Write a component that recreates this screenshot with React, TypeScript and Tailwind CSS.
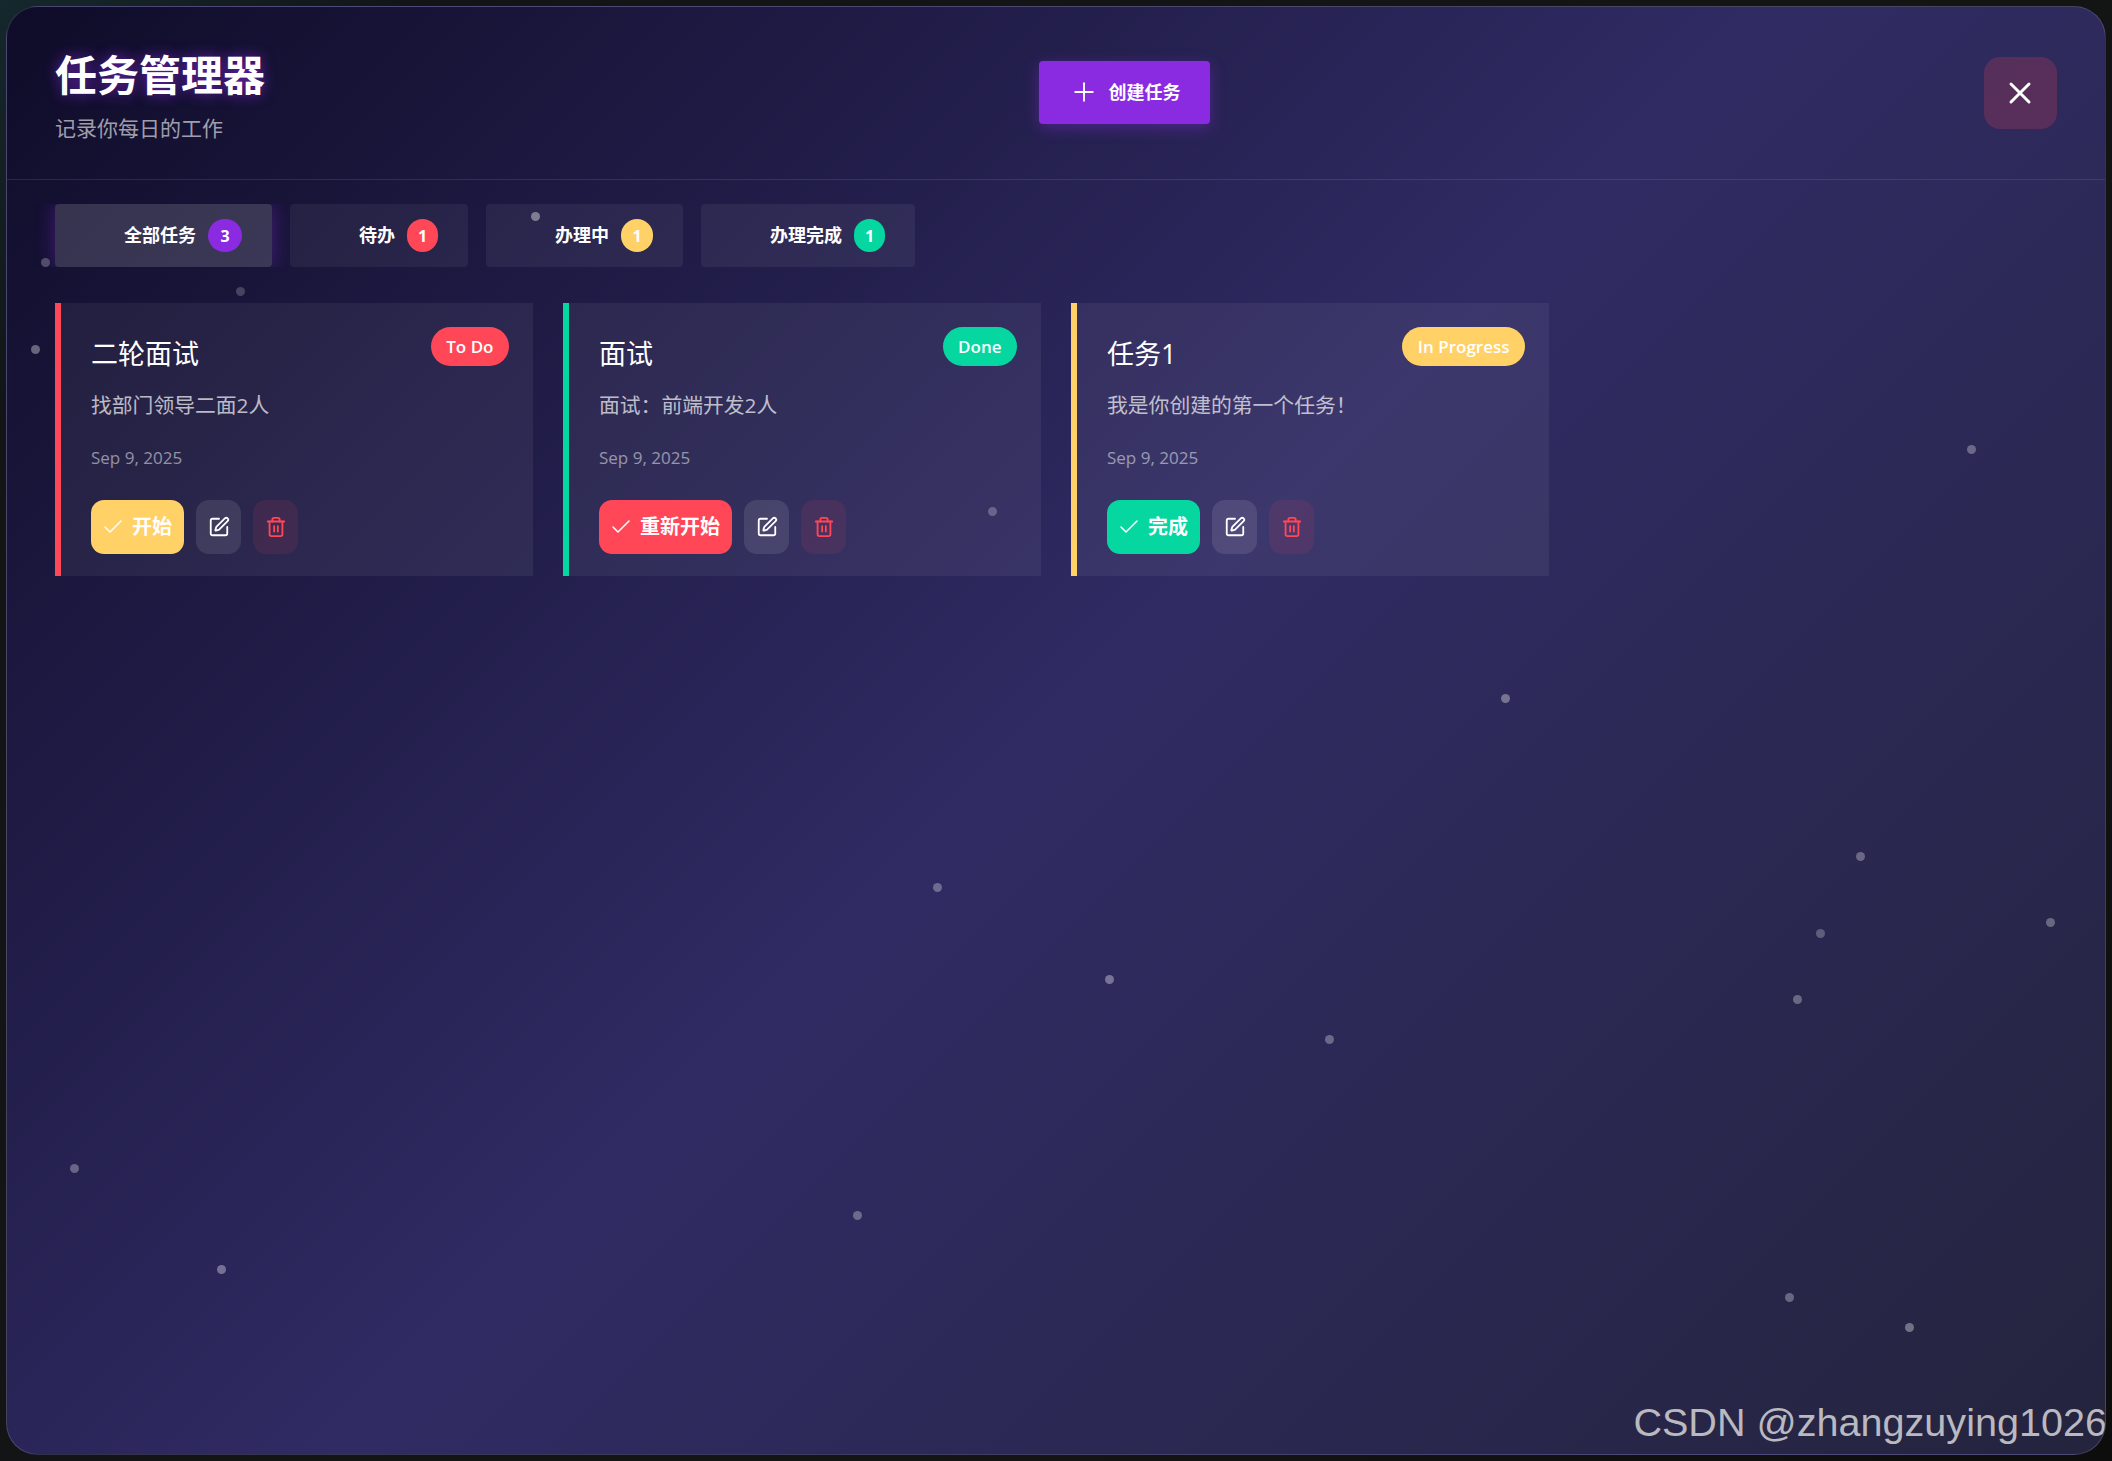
import { Check, Plus, SquarePen, Trash2, X } from 'lucide-react'

const tabs = [
  { label: '全部任务', count: 3, badge: 'w-[34px] bg-[#8a2be2]', active: true },
  { label: '待办', count: 1, badge: 'w-[31px] bg-[#ff4757]', active: false },
  { label: '办理中', count: 1, badge: 'w-[32px] bg-[#ffd166]', active: false },
  { label: '办理完成', count: 1, badge: 'w-[31px] bg-[#06d6a0]', active: false },
]

const tasks = [
  {
    title: '二轮面试',
    desc: '找部门领导二面2人',
    status: 'To Do',
    edge: 'border-[#ff4757]',
    pill: 'bg-[#ff4757]',
    action: '开始',
    actionBg: 'bg-[#ffd166]',
  },
  {
    title: '面试',
    desc: '面试：前端开发2人',
    status: 'Done',
    edge: 'border-[#06d6a0]',
    pill: 'bg-[#06d6a0]',
    action: '重新开始',
    actionBg: 'bg-[#ff4757]',
  },
  {
    title: '任务1',
    desc: '我是你创建的第一个任务！',
    status: 'In Progress',
    edge: 'border-[#ffd166]',
    pill: 'bg-[#ffd166]',
    action: '完成',
    actionBg: 'bg-[#06d6a0]',
  },
]

// floating particles, page coordinates of each dot's centre
const dots = [
  [45, 263, 0.25], [240, 292, 0.2], [35, 350, 0.35], [535, 217, 0.4], [992, 512, 0.25],
  [1971, 450, 0.3], [1505, 699, 0.35], [937, 888, 0.3], [1860, 857, 0.3], [1820, 934, 0.25],
  [2050, 923, 0.3], [1109, 980, 0.35], [1797, 1000, 0.3], [1329, 1040, 0.3], [74, 1169, 0.3],
  [857, 1216, 0.3], [221, 1270, 0.35], [1789, 1298, 0.3], [1909, 1328, 0.35],
]

function TaskCard({ task }: { task: (typeof tasks)[number] }) {
  return (
    <div className={`relative h-[273px] border-l-[6px] bg-white/[0.06] pl-[30px] ${task.edge}`}>
      <span
        className={`absolute right-[24px] top-[24px] flex h-[39px] items-center rounded-full px-[15.5px] text-[17px] font-semibold text-white ${task.pill}`}
      >
        {task.status}
      </span>
      <h3 className="pt-[30px] text-[27px] font-normal leading-[42px] text-white">{task.title}</h3>
      <p className="mt-[15px] text-[20.8px] leading-[30px] text-white/70">{task.desc}</p>
      <p className="mt-[26px] text-[17px] leading-[24px] text-white/50">Sep 9, 2025</p>
      <div className="mt-[30px] flex gap-[12px]">
        <button
          className={`flex h-[54px] items-center gap-[7px] rounded-[13px] pl-[10px] pr-[12px] text-[20px] font-bold text-white ${task.actionBg}`}
        >
          <Check size={24} strokeWidth={1.5} />
          {task.action}
        </button>
        <button className="flex h-[54px] w-[45px] items-center justify-center rounded-[13px] bg-white/10 text-white">
          <SquarePen size={22} />
        </button>
        <button className="flex h-[54px] w-[45px] items-center justify-center rounded-[13px] bg-[#ff4757]/10 text-[#ff4757]">
          <Trash2 size={22} />
        </button>
      </div>
    </div>
  )
}

export default function App() {
  return (
    <div className="h-[1461px] w-[2112px] overflow-hidden bg-[linear-gradient(135deg,#15282d,#121416_12%,#141414_70%,#0d0d0d)] p-[6px] font-['Open_Sans','Noto_Sans_CJK_SC',sans-serif]">
      <div className="relative h-full overflow-hidden rounded-[32px] border border-white/15 bg-[linear-gradient(135deg,#0f0c29,#302b63,#24243e)]">
        {/* Header */}
        <header className="flex h-[173px] items-center justify-between border-b border-white/10 px-[48px]">
          <div className="pt-[4px]">
            <h1 className="text-[42px] font-bold leading-[56px] text-white [text-shadow:0_0_14px_rgba(138,43,226,0.7)]">
              任务管理器
            </h1>
            <p className="mt-[10px] text-[21px] leading-[30px] text-white/60">记录你每日的工作</p>
          </div>
          <button className="mb-[2px] flex h-[63px] w-[171px] items-center justify-center gap-[10px] rounded-[4px] bg-[#8a2be2] text-[18px] font-bold text-white shadow-[0_4px_15px_rgba(138,43,226,0.4)]">
            <Plus size={30} strokeWidth={1.5} />
            创建任务
          </button>
          <button className="flex h-[72px] w-[73px] items-center justify-center rounded-[16px] bg-[#ff4757]/20 text-white">
            <X size={36} strokeWidth={2} />
          </button>
        </header>

        {/* Filter tabs, the row clips the active glow top and bottom */}
        <div className="mt-[24px] flex gap-[18px] overflow-hidden px-[48px]">
          {tabs.map((tab) => (
            <button
              key={tab.label}
              className={`flex h-[63px] items-center gap-[12px] rounded-[4px] pl-[69px] pr-[30px] text-[18px] font-bold text-white ${
                tab.active ? 'bg-white/15 shadow-[0_0_20px_rgba(138,43,226,0.4)]' : 'bg-white/[0.06]'
              }`}
            >
              {tab.label}
              <span className={`flex h-[33px] items-center justify-center rounded-full text-[16px] font-bold ${tab.badge}`}>
                {tab.count}
              </span>
            </button>
          ))}
        </div>

        {/* Task cards */}
        <div className="mt-[36px] grid grid-cols-[repeat(auto-fill,478px)] gap-[30px] px-[48px]">
          {tasks.map((task) => (
            <TaskCard key={task.title} task={task} />
          ))}
        </div>

        {dots.map(([x, y, alpha]) => (
          <span
            key={`${x}-${y}`}
            className="absolute h-[9px] w-[9px] rounded-full bg-white"
            style={{ left: x - 11.5, top: y - 12, opacity: alpha }}
          />
        ))}

        <span className="absolute bottom-[11px] right-[-2px] font-['Liberation_Sans',sans-serif] text-[39.6px] leading-none text-[#b9b9bf]">
          CSDN @zhangzuying1026
        </span>
      </div>
    </div>
  )
}
